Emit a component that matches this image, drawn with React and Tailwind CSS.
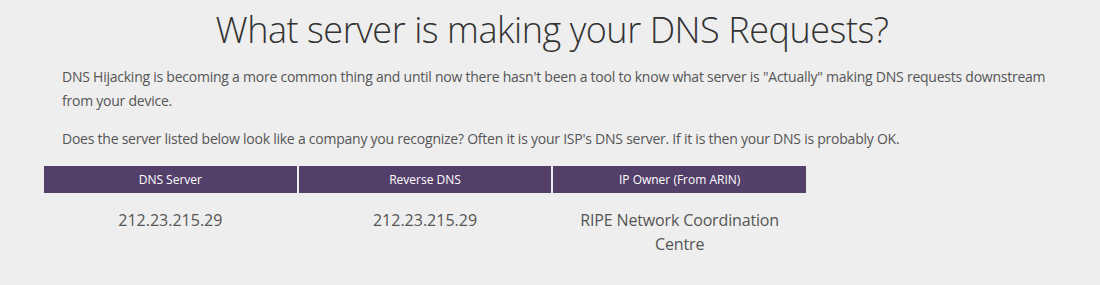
import React from 'react';

const rows = [
    { server: '212.23.215.29', reverse: '212.23.215.29', owner: 'RIPE Network Coordination Centre' },
];

const App = () => {
    return (
        <div className="min-h-[285px] bg-[#eeeeee] font-['Open_Sans',sans-serif] text-[#555555]">
            <div className="w-[1016px] ml-[44px] pt-[10px]">
                {/* --- Title --- */}
                <h1 className="text-center text-[36px] leading-[40px] font-light tracking-[-0.45px] text-[#333333]">
                    What server is making your DNS Requests?
                </h1>

                {/* --- Intro --- */}
                <div className="pl-[18px] pr-[4px] mt-[15px] text-[14px] leading-[24px] tracking-[-0.24px]">
                    <p>
                        DNS Hijacking is becoming a more common thing and until now there hasn't been a tool to know what server is "Actually" making DNS requests downstream from your device.
                    </p>
                    <p className="mt-[14px]">
                        Does the server listed below look like a company you recognize? Often it is your ISP's DNS server. If it is then your DNS is probably OK.
                    </p>
                </div>

                {/* --- Results table --- */}
                <div className="w-[762px] mt-[15px]">
                    <div className="grid grid-cols-3 gap-[2px]">
                        {['DNS Server', 'Reverse DNS', 'IP Owner (From ARIN)'].map((h) => (
                            <div key={h} className="h-[27px] flex items-center justify-center bg-[#533f69] text-white text-[12px]">
                                {h}
                            </div>
                        ))}
                    </div>
                    {rows.map((r, i) => (
                        <div key={i} className="grid grid-cols-3 gap-[2px] pt-[15px] text-[16px] leading-[24px] text-center">
                            <div>{r.server}</div>
                            <div>{r.reverse}</div>
                            <div className="px-[20px] tracking-[-0.15px]">{r.owner}</div>
                        </div>
                    ))}
                </div>
            </div>
        </div>
    );
};

export default App;
